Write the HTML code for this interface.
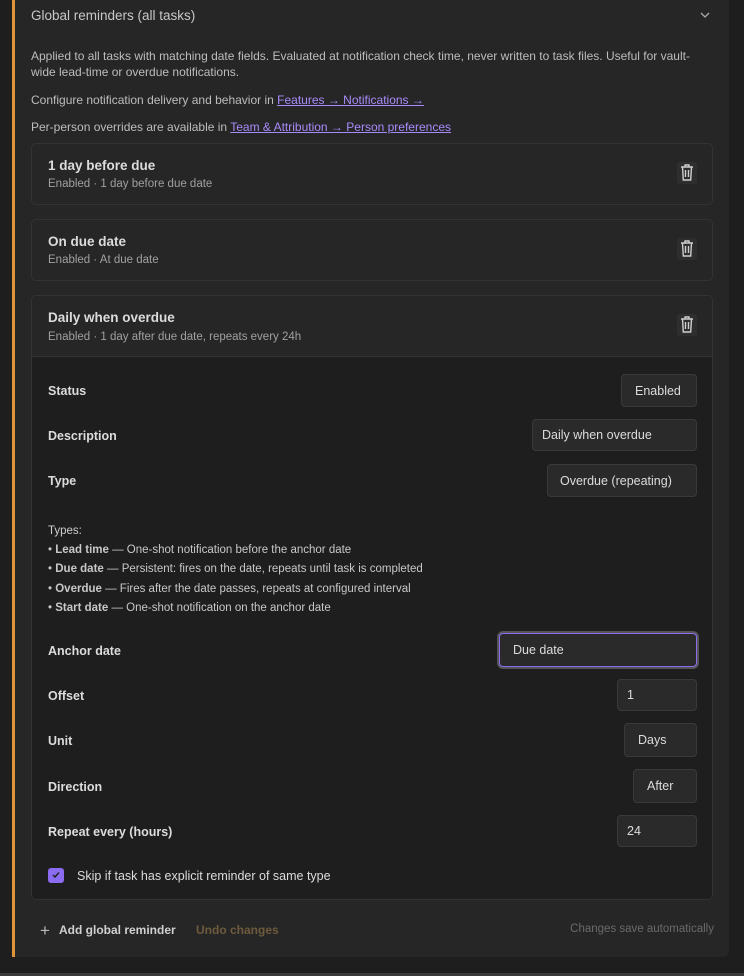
<!DOCTYPE html>
<html><head><meta charset="utf-8"><style>
*{margin:0;padding:0;box-sizing:border-box}
body{width:744px;height:976px;background:#1e1e1e;font-family:"Liberation Sans",sans-serif;color:#dadada;position:relative;overflow:hidden}
.a{position:absolute;white-space:nowrap;line-height:1}
div.a{padding-top:1px}
#panel{position:absolute;left:12px;top:0;width:717px;height:957px;background:#262626;border-left:3px solid #e0943a;border-radius:0 0 6px 0}
.card{position:absolute;left:31px;width:682px;background:#262626;border:1px solid #333;border-radius:5px}
.t{font-size:13.5px;font-weight:bold;color:#dcdcdc}
.s{font-size:11.5px;color:#a0a0a0}
.d{font-size:12px;color:#bdbdbd}
a{color:#a88bfa;text-decoration:underline}
.lbl{font-size:12.5px;font-weight:bold;color:#dcdcdc}
.in{position:absolute;background:#2a2a2a;border:1px solid #3a3a3a;border-radius:4px;font-size:12.5px;color:#dcdcdc;display:flex;align-items:center;padding-left:12px}
</style></head><body>
<div id="panel"></div>
<div class="a" style="left:31px;top:8px;font-size:13.5px;color:#c8c8c8">Global reminders (all tasks)</div>
<svg class="a" style="left:699px;top:10px" width="12" height="10" viewBox="0 0 12 10"><path d="M2 3l4 4 4-4" stroke="#aaa" stroke-width="1.3" fill="none"/></svg>
<div class="a d" style="left:31px;top:49px">Applied to all tasks with matching date fields. Evaluated at notification check time, never written to task files. Useful for vault-</div>
<div class="a d" style="left:31px;top:65px">wide lead-time or overdue notifications.</div>
<div class="a d" style="left:31px;top:93px">Configure notification delivery and behavior in <a>Features → Notifications →</a></div>
<div class="a d" style="left:31px;top:120px">Per-person overrides are available in <a>Team &amp; Attribution → Person preferences</a></div>

<div class="card" style="top:143px;height:62px"></div>
<div class="a t" style="left:48px;top:158px">1 day before due</div>
<div class="a s" style="left:48px;top:178px">Enabled · 1 day before due date</div>

<div class="card" style="top:219px;height:62px"></div>
<div class="a t" style="left:48px;top:234px">On due date</div>
<div class="a s" style="left:48px;top:254px">Enabled · At due date</div>

<div class="card" style="top:295px;height:605px;background:#1e1e1e;overflow:hidden"><div style="height:61px;background:#262626;border-bottom:1px solid #333"></div></div>
<div class="a t" style="left:48px;top:310px">Daily when overdue</div>
<div class="a s" style="left:48px;top:331px">Enabled · 1 day after due date, repeats every 24h</div>

<svg class="a" style="left:677px;top:162px" width="20" height="22" viewBox="0 0 20 22"><rect width="20" height="22" rx="3" fill="#2e2e2e"/><path d="M4 5h12M8 5V3h4v2M5.5 5l.8 13h7.4l.8-13M8.5 8v7M11.5 8v7" stroke="#cfcfcf" stroke-width="1.4" fill="none"/></svg>
<svg class="a" style="left:677px;top:238px" width="20" height="22" viewBox="0 0 20 22"><rect width="20" height="22" rx="3" fill="#2e2e2e"/><path d="M4 5h12M8 5V3h4v2M5.5 5l.8 13h7.4l.8-13M8.5 8v7M11.5 8v7" stroke="#cfcfcf" stroke-width="1.4" fill="none"/></svg>
<svg class="a" style="left:677px;top:314px" width="20" height="22" viewBox="0 0 20 22"><rect width="20" height="22" rx="3" fill="#2e2e2e"/><path d="M4 5h12M8 5V3h4v2M5.5 5l.8 13h7.4l.8-13M8.5 8v7M11.5 8v7" stroke="#cfcfcf" stroke-width="1.4" fill="none"/></svg>

<div class="a lbl" style="left:48px;top:384px">Status</div>
<div class="in" style="left:621px;top:374px;width:76px;height:33px;padding-left:13px">Enabled</div>
<div class="a lbl" style="left:48px;top:429px">Description</div>
<div class="in" style="left:532px;top:419px;width:165px;height:32px;padding-left:9px">Daily when overdue</div>
<div class="a lbl" style="left:48px;top:474px">Type</div>
<div class="in" style="left:547px;top:464px;width:150px;height:33px">Overdue (repeating)</div>

<div class="a" style="left:48px;top:525px;font-size:11.5px;color:#cfcfcf">Types:</div>
<div class="a" style="left:48px;top:544px;font-size:11.5px;color:#c8c8c8">• <b>Lead time</b> — One-shot notification before the anchor date</div>
<div class="a" style="left:48px;top:563px;font-size:11.5px;color:#c8c8c8">• <b>Due date</b> — Persistent: fires on the date, repeats until task is completed</div>
<div class="a" style="left:48px;top:583px;font-size:11.5px;color:#c8c8c8">• <b>Overdue</b> — Fires after the date passes, repeats at configured interval</div>
<div class="a" style="left:48px;top:602px;font-size:11.5px;color:#c8c8c8">• <b>Start date</b> — One-shot notification on the anchor date</div>

<div class="a lbl" style="left:48px;top:644px">Anchor date</div>
<div class="in" style="left:499px;top:633px;width:198px;height:34px;border:1px solid #8b6cf0;box-shadow:0 0 0 2px #555;padding-left:13px">Due date</div>
<div class="a lbl" style="left:48px;top:689px">Offset</div>
<div class="in" style="left:617px;top:679px;width:80px;height:32px;padding-left:9px">1</div>
<div class="a lbl" style="left:48px;top:734px">Unit</div>
<div class="in" style="left:624px;top:723px;width:73px;height:34px;padding-left:13px">Days</div>
<div class="a lbl" style="left:48px;top:780px">Direction</div>
<div class="in" style="left:633px;top:769px;width:64px;height:34px;padding-left:13px">After</div>
<div class="a lbl" style="left:48px;top:825px">Repeat every (hours)</div>
<div class="in" style="left:617px;top:815px;width:80px;height:32px;padding-left:9px">24</div>

<div class="a" style="left:48px;top:868px;width:16px;height:15px;background:#8b6cf0;border-radius:3px"></div>
<svg class="a" style="left:50px;top:869px" width="12" height="12" viewBox="0 0 12 12"><path d="M3 6l2 2 4-4.5" stroke="#222" stroke-width="1.5" fill="none"/></svg>
<div class="a" style="left:77px;top:869px;font-size:12.5px;color:#dcdcdc">Skip if task has explicit reminder of same type</div>

<div class="a" style="left:40px;top:921px;font-size:17px;color:#bbb;font-weight:300">+</div>
<div class="a" style="left:59px;top:923px;font-size:12px;color:#d0d0d0;font-weight:bold">Add global reminder</div>
<div class="a" style="left:196px;top:923px;font-size:12px;color:#6e5a3c;font-weight:bold">Undo changes</div>
<div class="a" style="right:30px;top:923px;font-size:11.5px;color:#6a6a6a">Changes save automatically</div>
<div class="a" style="left:0;top:973px;width:744px;height:3px;background:#3a3a3a"></div>
</body></html>
